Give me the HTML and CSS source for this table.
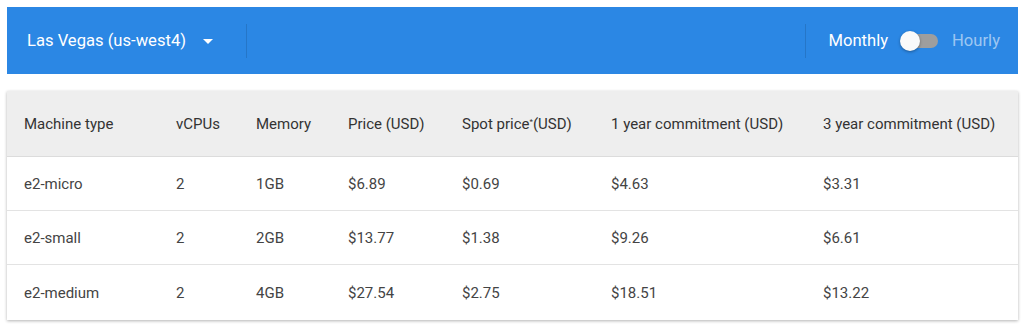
FILE: index.html
```html
<!DOCTYPE html>
<html lang="en">
<head>
    <meta charset="UTF-8">
    <meta name="viewport" content="width=device-width, initial-scale=1.0">
    <title>E2 pricing</title>
    <link rel="stylesheet" href="styles.css">
</head>
<body>
    <div class="page">
        <div class="toolbar">
            <div class="region">
                <span class="region-name">Las Vegas (us-west4)</span>
                <svg class="caret" width="10" height="5" viewBox="0 0 10 5"><path d="M0 0h10L5 5z" fill="#fff"/></svg>
            </div>
            <div class="spacer"></div>
            <div class="period">
                <span class="period-label">Monthly</span>
                <span class="switch"><span class="knob"></span></span>
                <span class="period-label dim">Hourly</span>
            </div>
        </div>

        <table class="prices">
            <thead>
                <tr>
                    <th class="c1">Machine type</th>
                    <th class="c2">vCPUs</th>
                    <th class="c3">Memory</th>
                    <th class="c4">Price (USD)</th>
                    <th class="c5">Spot price<sup>*</sup>(USD)</th>
                    <th class="c6">1 year commitment (USD)</th>
                    <th class="c7">3 year commitment (USD)</th>
                </tr>
            </thead>
            <tbody>
                <tr>
                    <td>e2-micro</td><td>2</td><td>1GB</td><td>$6.89</td><td>$0.69</td><td>$4.63</td><td>$3.31</td>
                </tr>
                <tr>
                    <td>e2-small</td><td>2</td><td>2GB</td><td>$13.77</td><td>$1.38</td><td>$9.26</td><td>$6.61</td>
                </tr>
                <tr>
                    <td>e2-medium</td><td>2</td><td>4GB</td><td>$27.54</td><td>$2.75</td><td>$18.51</td><td>$13.22</td>
                </tr>
            </tbody>
        </table>
    </div>
</body>
</html>
```

FILE: styles.css
```css
body {
    margin: 0;
    background: #fff;
    font-family: Roboto, "Liberation Sans", Arial, sans-serif;
}
.page {
    padding: 7px 6px 7px 7px;
}
.toolbar {
    display: flex;
    align-items: center;
    height: 67px;
    background: #2b87e4;
    color: #fff;
}
.region {
    display: flex;
    align-items: center;
    height: 34px;
    width: 219px;
    padding-left: 20px;
    border-right: 1px solid rgba(0,0,0,0.12);
    font-size: 16.6px;
}
.caret {
    margin-left: 17px;
    margin-top: 1px;
}
.spacer {
    flex: 1;
}
.period {
    display: flex;
    align-items: center;
    height: 34px;
    padding: 0 18px 0 22px;
    border-left: 1px solid rgba(0,0,0,0.12);
    font-size: 16.6px;
}
.period-label.dim {
    color: rgba(255,255,255,0.55);
}
.switch {
    position: relative;
    width: 35px;
    height: 14px;
    margin: 0 14px 0 15px;
    border-radius: 7px;
    background: #9e9e9e;
}
.knob {
    position: absolute;
    left: -3px;
    top: -3px;
    width: 20px;
    height: 20px;
    border-radius: 50%;
    background: #fafafa;
    box-shadow: 0 1px 3px rgba(0,0,0,0.35);
}
.prices {
    width: 1011px;
    margin-top: 17px;
    border-collapse: collapse;
    table-layout: fixed;
    font-size: 15px;
    box-shadow: 0 1px 3px rgba(0,0,0,0.3);
}
.prices th {
    height: 65px;
    padding: 0 0 0 17px;
    background: #eeeeee;
    color: #333;
    font-weight: 400;
    text-align: left;
    border-bottom: 1px solid #dcdcdc;
}
.prices th sup {
    font-size: 8px;
    vertical-align: 5px;
}
.prices td {
    height: 53px;
    padding: 0 0 0 17px;
    color: #444;
    border-bottom: 1px solid #e3e3e3;
}
.prices tr:last-child td {
    border-bottom: none;
    height: 55px;
}
.c1 { width: 135px; }
.c2 { width: 63px; }
.c3 { width: 75px; }
.c4 { width: 97px; }
.c5 { width: 132px; }
.c6 { width: 195px; }
.c7 { width: 195px; }
```
